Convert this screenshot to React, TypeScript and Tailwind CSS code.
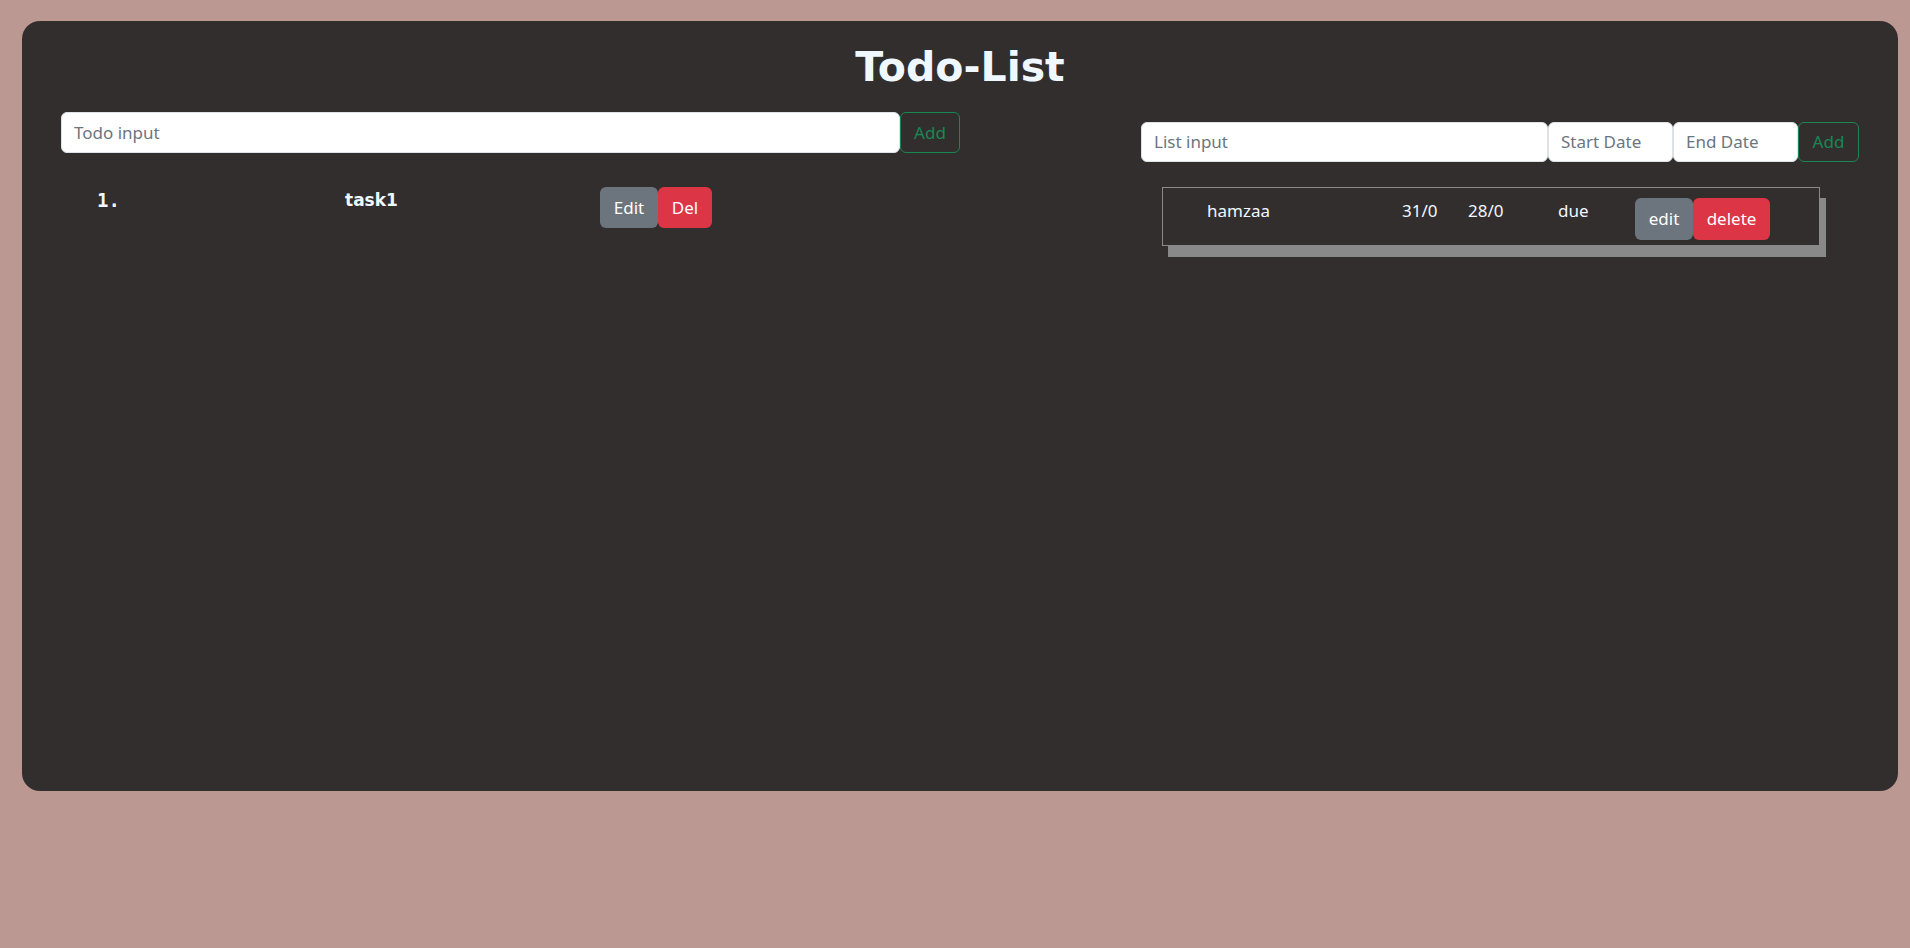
const TODOS = [{ id: 1, text: 'task1' }];

const LISTS = [{ id: 1, name: 'hamzaa', start: '31/0', end: '28/0', status: 'due' }];

const FONT = "font-['Segoe_UI','Noto_Sans','Open_Sans',sans-serif]";

export default function App() {
  return (
    <div className={`min-h-screen bg-[#bc9893] pt-[21px] pl-[22px] pr-[12px] ${FONT}`}>
      <div className="h-[770px] rounded-[18px] bg-[#322e2e] px-[39px]">
        <h1 className="pt-[14px] text-center text-[41px] leading-[64px] font-bold text-[#f0f8ff] font-['Comic_Sans_MS','DejaVu_Sans',cursive]">
          Todo-List
        </h1>

        <div className="flex mt-[13px]">
          {/* left: todos */}
          <div className="w-[899px] flex flex-col">
            <div className="flex h-[41px]">
              <input
                placeholder="Todo input"
                className="flex-1 rounded-[6px] border border-[#dee2e6] bg-white px-[12px] text-[17px] text-[#212529] placeholder:text-[#6c757d] outline-none"
              />
              <button className="w-[60px] rounded-[6px] border border-[#198754] text-[17px] text-[#198754]">Add</button>
            </div>

            <div className="mt-[34px] flex flex-col gap-2">
              {TODOS.map((t, i) => (
                <div key={t.id} className="flex items-start">
                  <span className="w-[284px] pl-[36px] text-[19px] leading-[26px] font-bold text-[#f0f8ff] font-['DejaVu_Sans_Mono',monospace]">
                    {i + 1}.
                  </span>
                  <span className="w-[255px] text-[17px] leading-[26px] font-bold text-[#f0f8ff] font-['Comic_Sans_MS','DejaVu_Sans',cursive]">
                    {t.text}
                  </span>
                  <button className="h-[41px] w-[58px] rounded-[6px] bg-[#6c757d] text-[17px] text-white">Edit</button>
                  <button className="h-[41px] w-[54px] rounded-[6px] bg-[#dc3545] text-[17px] text-white">Del</button>
                </div>
              ))}
            </div>
          </div>

          {/* right: lists */}
          <div className="flex-1 flex flex-col items-end">
            <div className="mt-[10px] flex h-[40px] w-[718px]">
              <input
                placeholder="List input"
                className="w-[407px] rounded-[6px] border border-[#dee2e6] bg-white px-[12px] text-[17px] placeholder:text-[#6c757d] outline-none"
              />
              <input
                placeholder="Start Date"
                className="w-[125px] rounded-[6px] border border-[#dee2e6] bg-white px-[12px] text-[17px] placeholder:text-[#6c757d] outline-none"
              />
              <input
                placeholder="End Date"
                className="w-[125px] rounded-[6px] border border-[#dee2e6] bg-white px-[12px] text-[17px] placeholder:text-[#6c757d] outline-none"
              />
              <button className="w-[61px] rounded-[6px] border border-[#198754] text-[17px] text-[#198754]">Add</button>
            </div>

            <div className="mt-[25px] w-[718px] pl-[21px] flex flex-col gap-4">
              {LISTS.map((l) => (
                <div
                  key={l.id}
                  className="flex items-start h-[59px] w-[658px] border border-[#8a8a8a] pt-[10px] pl-[44px] text-[17px] leading-[26px] text-[#f0f8ff] shadow-[6px_11px_0_#898989]"
                >
                  <span className="w-[195px]">{l.name}</span>
                  <span className="w-[66px]">{l.start}</span>
                  <span className="w-[90px]">{l.end}</span>
                  <span className="w-[77px]">{l.status}</span>
                  <button className="h-[42px] w-[58px] rounded-[6px] bg-[#6c757d] text-white">edit</button>
                  <button className="h-[42px] w-[77px] rounded-[6px] bg-[#dc3545] text-white">delete</button>
                </div>
              ))}
            </div>
          </div>
        </div>
      </div>
    </div>
  );
}
